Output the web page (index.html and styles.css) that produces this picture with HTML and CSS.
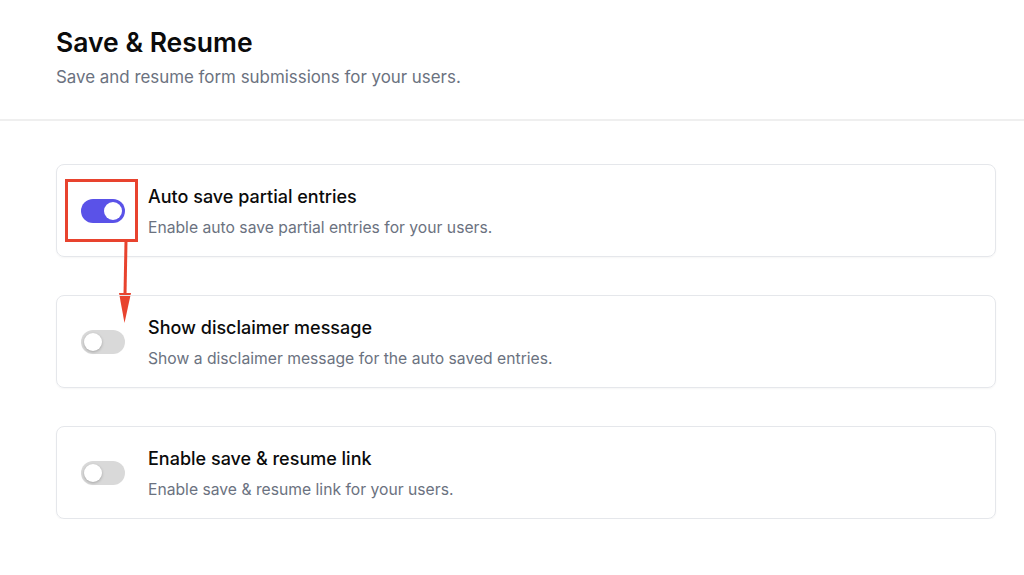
FILE: index.html
```html
<!DOCTYPE html>
<html lang="en">
<head>
  <meta charset="UTF-8" />
  <title>Save &amp; Resume</title>
  <link rel="stylesheet" href="styles.css">
</head>
<body>
  <header class="page-head">
    <h1>Save &amp; Resume</h1>
    <p>Save and resume form submissions for your users.</p>
  </header>

  <main class="settings">
    <div class="card">
      <span class="toggle on"><span class="knob"></span></span>
      <div class="card-text">
        <h3>Auto save partial entries</h3>
        <p>Enable auto save partial entries for your users.</p>
      </div>
      <span class="mark-box"></span>
      <svg class="mark-arrow" width="20" height="84" viewBox="0 0 20 84">
        <line x1="11" y1="0" x2="10" y2="54" stroke="#e8432e" stroke-width="3" />
        <polygon points="4,52 16,52 9.5,82" fill="#e8432e" />
      </svg>
    </div>

    <div class="card">
      <span class="toggle"><span class="knob"></span></span>
      <div class="card-text">
        <h3>Show disclaimer message</h3>
        <p>Show a disclaimer message for the auto saved entries.</p>
      </div>
    </div>

    <div class="card">
      <span class="toggle"><span class="knob"></span></span>
      <div class="card-text">
        <h3>Enable save &amp; resume link</h3>
        <p>Enable save &amp; resume link for your users.</p>
      </div>
    </div>
  </main>
</body>
</html>
```

FILE: styles.css
```css
* {
  margin: 0; padding: 0; box-sizing: border-box;
}
body {
  font-family: Inter, "Liberation Sans", sans-serif;
  background: #fff; color: #111;
}
.page-head {
  padding: 26px 56px 31px;
  border-bottom: 2px solid #efefef;
}
.page-head h1 {
  font-size: 26.5px; font-weight: 600;
  line-height: 32px; color: #0b0b0b;
}
.page-head p {
  margin-top: 8px;
  font-size: 16.9px; line-height: 22px;
  color: #6b7280;
}
.settings {
  padding: 43px 28px 0 56px;
  display: flex; flex-direction: column; gap: 38px;
}
.card {
  position: relative;
  display: flex; align-items: center; gap: 23px;
  height: 93px; padding: 0 24px;
  border: 1px solid #e5e7eb; border-radius: 8px;
  box-shadow: 0 1px 2px rgba(0,0,0,0.04);
}
.toggle {
  position: relative; flex: none;
  width: 44px; height: 24px; border-radius: 12px;
  background: #d9d9d9;
}
.toggle .knob {
  position: absolute; top: 3px; left: 3px;
  width: 18px; height: 18px; border-radius: 50%;
  background: #fff;
  box-shadow: 0 1px 3px rgba(0,0,0,0.25);
}
.toggle.on {
  background: #5a52e8;
}
.toggle.on .knob {
  left: 23px; box-shadow: none;
}
.card-text {
  margin-top: 2px;
}
.card-text h3 {
  font-size: 18px; font-weight: 500;
  line-height: 24px; color: #0b0b0b;
}
.card-text p {
  margin-top: 8px;
  font-size: 15.7px; line-height: 22px;
  color: #6b7280;
}
.mark-box {
  position: absolute; left: 8px; top: 14px;
  width: 73px; height: 63px;
  border: 3px solid #e8432e;
}
.mark-arrow {
  position: absolute; left: 58px; top: 76px;
}
```
